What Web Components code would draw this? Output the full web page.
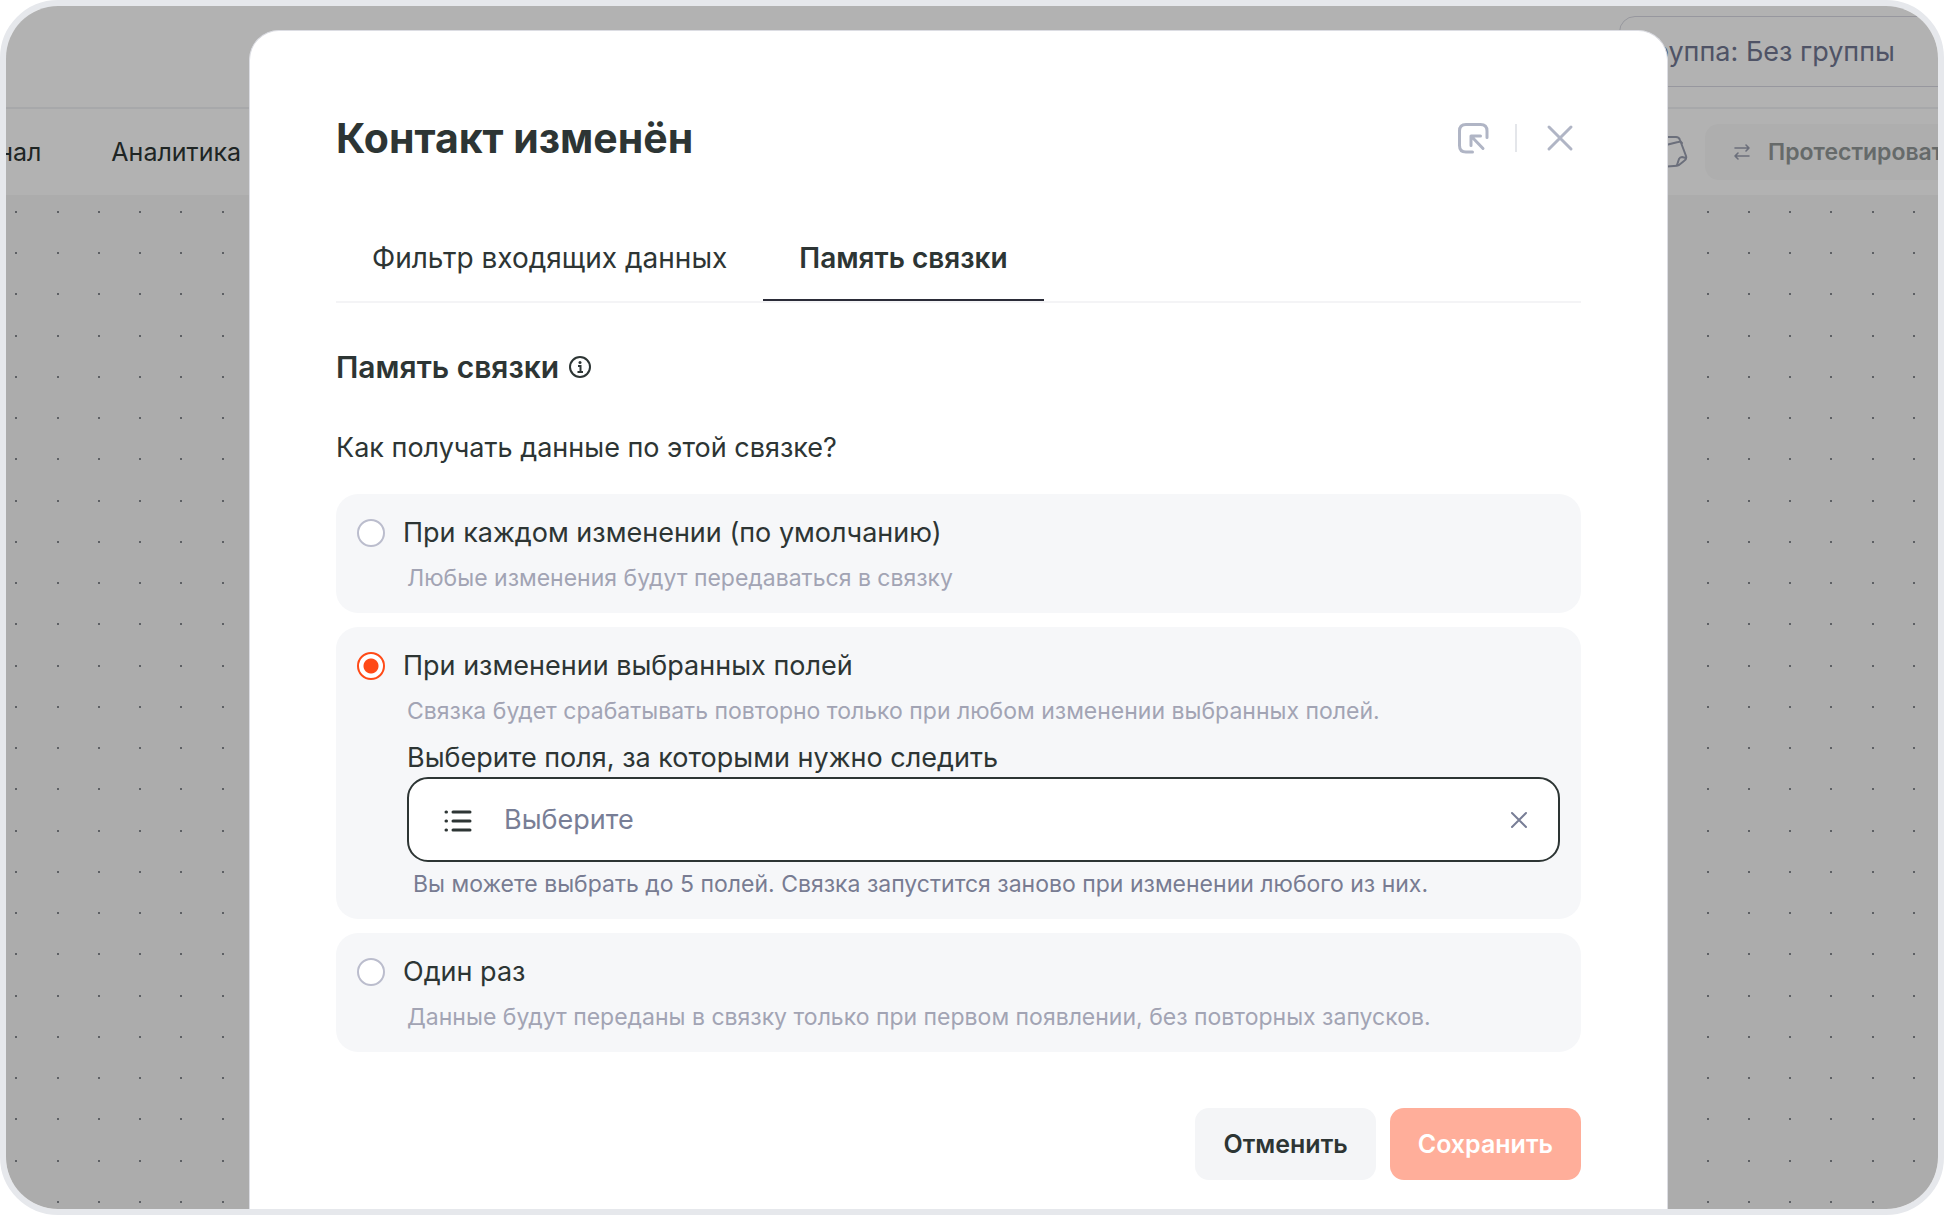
<!DOCTYPE html>
<html lang="ru">
<head>
<meta charset="utf-8">
<title>Контакт изменён</title>
<style>
  body {
    margin: 0;
    background: #fff;
    color: #2d3534;
    font-family: Inter, "Liberation Sans", sans-serif;
    font-size: 27px;
  }
</style>
</head>
<body>

<app-frame>
  <app-topbar slot="page"></app-topbar>
  <app-toolbar slot="page"></app-toolbar>
  <dot-canvas slot="page"></dot-canvas>

  <modal-window heading="Контакт изменён">
    <tab-list>
      <tab-item>Фильтр входящих данных</tab-item>
      <tab-item active>Память связки</tab-item>
    </tab-list>

    <memory-form>
      <option-card heading="При каждом изменении (по умолчанию)" text="Любые изменения будут передаваться в связку"></option-card>
      <option-card checked heading="При изменении выбранных полей" text="Связка будет срабатывать повторно только при любом изменении выбранных полей.">
        <field-picker label="Выберите поля, за которыми нужно следить" placeholder="Выберите">Вы можете выбрать до 5 полей. Связка запустится заново при изменении любого из них.</field-picker>
      </option-card>
      <option-card heading="Один раз" text="Данные будут переданы в связку только при первом появлении, без повторных запусков."></option-card>
    </memory-form>

    <action-button slot="footer">Отменить</action-button>
    <action-button slot="footer" primary>Сохранить</action-button>
  </modal-window>
</app-frame>

<script>
// base: every element only gives its template
class BaseElement extends HTMLElement {
  constructor() {
    super();
    this.attachShadow({ mode: "open" });
  }

  attr(name) {
    return this.getAttribute(name) || "";
  }

  connectedCallback() {
    const template = document.createElement("template");
    template.innerHTML = this.getTemplate();
    this.shadowRoot.replaceChildren(template.content.cloneNode(true));
  }
}

// rounded frame: page below, dimmed, and the modal on top
class AppFrame extends BaseElement {
  getTemplate() {
    return `
      <style>
        :host {
          display: block;
          box-sizing: border-box;
          height: 100vh;
          position: relative;
          overflow: hidden;
          border: 6px solid #e6e8ec;
          border-radius: 58px;
        }
        .page {
          display: flex;
          flex-direction: column;
          height: 100%;
        }
        .overlay {
          position: absolute;
          inset: 0;
          display: flex;
          box-sizing: border-box;
          padding: 24px 270px 0 243px;
          background: rgba(0, 0, 0, .3);
        }
      </style>
      <div class="page"><slot name="page"></slot></div>
      <div class="overlay"><slot></slot></div>
    `;
  }
}

class AppTopbar extends BaseElement {
  getTemplate() {
    return `
      <style>
        :host {
          display: flex;
          align-items: flex-start;
          justify-content: flex-end;
          height: 91px;
          padding-top: 10px;
          border-bottom: 2px solid #f0f1f4;
        }
        button {
          box-sizing: border-box;
          height: 71px;
          margin-right: -60px;
          padding: 0 102px 0 18px;
          border: 1px solid #d8d9e2;
          border-radius: 16px;
          background: #fff;
          color: #717892;
          font: inherit;
          line-height: 69px;
          white-space: nowrap;
        }
      </style>
      <button type="button">Группа: Без группы</button>
    `;
  }
}

class AppToolbar extends BaseElement {
  getTemplate() {
    return `
      <style>
        :host {
          display: flex;
          justify-content: space-between;
          height: 86px;
          font-size: 25px;
          background: #fff;
        }
        nav {
          display: flex;
          align-items: center;
          justify-content: flex-end;
          gap: 70px;
          width: 235px;
        }
        a {
          color: inherit;
          text-decoration: none;
        }
        .tools {
          display: flex;
          align-items: center;
          gap: 17px;
          width: 298px;
          overflow: hidden;
        }
        .tools svg { flex: none; }
        button {
          display: flex;
          align-items: center;
          flex: none;
          gap: 17px;
          height: 56px;
          padding: 0 28px;
          border: 0;
          border-radius: 14px;
          background: #fafafa;
          color: #929998;
          font: inherit;
          font-size: 23px;
          font-weight: 600;
        }
        button svg { color: #9a9fb0; }
      </style>
      <nav>
        <a href="#">Журнал</a>
        <a href="#">Аналитика</a>
      </nav>
      <div class="tools">
        <svg width="48" height="36" viewBox="0 0 48 36" fill="none" stroke="#9a9fb0" stroke-width="2" stroke-linecap="round" stroke-linejoin="round">
          <path d="M18 3h18q3 0 4 3l6 16q1 3-2 5l-5 4q-2 1-5 1L20 33"/>
          <path d="M18 13l20-5q3-1 4 1"/>
          <path d="M37 31l2-6q1-2 3-2l4 1"/>
        </svg>
        <button type="button">
          <svg width="18" height="18" viewBox="0 0 18 18" fill="none" stroke="currentColor" stroke-width="1.600" stroke-linecap="round" stroke-linejoin="round">
            <path d="M2 5h14M13 2l3 3-3 3M16 13H2M5 10l-3 3 3 3"/>
          </svg>
          Протестировать
        </button>
      </div>
    `;
  }
}

// grid of dots, one tile holds 4 x 4 of them
class DotCanvas extends BaseElement {
  getTemplate() {
    const columns = [10, 52, 93, 134];
    const rows = [10, 51, 92, 134];
    const dots = rows.map(y => columns.map(x =>
      `<rect x="${x - 1}" y="${y - 3}" width="2" height="2"/>`).join("")).join("");

    return `
      <style>
        :host {
          display: block;
          flex: 1;
          min-height: 0;
          background: #f6f6f6;
        }
        svg { display: block; }
      </style>
      <svg width="100%" height="100%" aria-hidden="true">
        <pattern id="dots" width="165" height="165" patternUnits="userSpaceOnUse" patternTransform="translate(0 9)">
          <g fill="#868a90">${dots}</g>
        </pattern>
        <rect width="100%" height="100%" fill="url(#dots)"/>
      </svg>
    `;
  }
}

class ModalWindow extends BaseElement {
  getTemplate() {
    return `
      <style>
        :host {
          display: block;
          flex: 1;
          box-sizing: border-box;
          padding: 81px 86px 0;
          border: 1px solid #dcdde3;
          border-bottom: 0;
          border-radius: 30px 30px 0 0;
          background: #fff;
        }
        header {
          display: flex;
          align-items: center;
          margin-bottom: 52px;
        }
        h1 {
          flex: 1;
          margin: 0;
          font-size: 41px;
          line-height: 52px;
          font-weight: 700;
        }
        header button {
          display: flex;
          padding: 0;
          border: 0;
          background: none;
          color: #b0b5c5;
        }
        .line {
          width: 2px;
          height: 28px;
          margin: 0 22px 0 26px;
          background: #e4e6ea;
        }
        footer {
          display: flex;
          justify-content: flex-end;
          gap: 14px;
          margin-top: 56px;
        }
      </style>
      <header>
        <h1>${this.attr("heading")}</h1>
        <button type="button" aria-label="Свернуть">
          <svg width="32" height="32" viewBox="0 0 32 32" fill="none" stroke="currentColor" stroke-width="3" stroke-linecap="round" stroke-linejoin="round">
            <path d="M15.500 30H9Q2.500 30 2.500 23.500V9Q2.500 2.500 9 2.500H23.500Q30 2.500 30 9V15.500"/>
            <path d="M14 23.500V14H23.500M14 14L26 26.500"/>
          </svg>
        </button>
        <span class="line"></span>
        <button type="button" aria-label="Закрыть">
          <svg width="42" height="32" viewBox="0 0 42 32" fill="none" stroke="currentColor" stroke-width="3" stroke-linecap="round">
            <path d="M10 5l22 22M32 5L10 27"/>
          </svg>
        </button>
      </header>
      <slot></slot>
      <footer><slot name="footer"></slot></footer>
    `;
  }
}

class TabList extends BaseElement {
  getTemplate() {
    return `
      <style>
        :host {
          display: flex;
          border-bottom: 2px solid #f4f4f6;
        }
      </style>
      <slot></slot>
    `;
  }

  connectedCallback() {
    this.setAttribute("role", "tablist");
    super.connectedCallback();
  }
}

class TabItem extends BaseElement {
  getTemplate() {
    const active = this.hasAttribute("active");

    return `
      <style>
        :host { display: block; }
        button {
          display: block;
          padding: 0 36px;
          border: 0;
          background: none;
          color: inherit;
          font: inherit;
          font-size: 28px;
          line-height: 85px;
        }
        button[aria-selected="true"] {
          font-weight: 600;
          box-shadow: inset 0 -2px #2b2c38;
        }
      </style>
      <button type="button" role="tab" aria-selected="${active}"><slot></slot></button>
    `;
  }
}

class MemoryForm extends BaseElement {
  getTemplate() {
    return `
      <style>
        :host { display: block; }
        h2 {
          display: flex;
          align-items: center;
          gap: 9px;
          margin: 44px 0 41px;
          font-size: 30px;
          line-height: 40px;
          font-weight: 600;
        }
        p {
          margin: 0 0 26px;
          line-height: 40px;
        }
        .options {
          display: flex;
          flex-direction: column;
          gap: 14px;
        }
      </style>
      <h2>
        Память связки
        <svg width="24" height="24" viewBox="0 0 24 24" fill="none" stroke="currentColor" stroke-width="2">
          <circle cx="12" cy="12" r="10"/>
          <path d="M10 11h2.500v6M9.500 17h5.500"/>
          <circle cx="12" cy="7.500" r="1.500" fill="currentColor" stroke="none"/>
        </svg>
      </h2>
      <p id="question">Как получать данные по этой связке?</p>
      <div class="options" role="radiogroup" aria-labelledby="question"><slot></slot></div>
    `;
  }
}

class OptionCard extends BaseElement {
  getTemplate() {
    return `
      <style>
        :host {
          display: block;
          padding: 16px 21px 13px;
          border-radius: 22px;
          background: #f6f7f9;
        }
        label {
          display: flex;
          align-items: center;
          gap: 18px;
          line-height: 46px;
        }
        input {
          appearance: none;
          flex: none;
          width: 28px;
          height: 28px;
          margin: 0;
          border: 2px solid #bbbdcd;
          border-radius: 50%;
          background: #fff;
        }
        input:checked {
          border-color: #ff4a17;
          background: radial-gradient(circle, #ff4a17 7px, #fff 8px);
        }
        .details { padding-left: 50px; }
        p {
          margin: 0;
          color: #a2a4b4;
          font-size: 23px;
          line-height: 44px;
        }
      </style>
      <label>
        <input type="radio" name="mode" aria-describedby="text" ${this.hasAttribute("checked") ? "checked" : ""}>
        ${this.attr("heading")}
      </label>
      <div class="details">
        <p id="text">${this.attr("text")}</p>
        <slot></slot>
      </div>
    `;
  }
}

class FieldPicker extends BaseElement {
  getTemplate() {
    return `
      <style>
        :host { display: block; }
        label {
          display: block;
          padding-top: 6px;
          line-height: 38px;
        }
        .field {
          display: flex;
          align-items: center;
          box-sizing: border-box;
          height: 85px;
          padding: 0 27px 0 33px;
          border: 2px solid #2d3534;
          border-radius: 21px;
          background: #fff;
        }
        input {
          flex: 1;
          min-width: 0;
          padding: 0;
          margin: 0 16px 0 30px;
          border: 0;
          outline: 0;
          background: none;
          color: inherit;
          font: inherit;
        }
        input::placeholder { color: #787e96; opacity: 1; }
        button {
          display: flex;
          padding: 0;
          border: 0;
          background: none;
          color: #787e96;
        }
        p {
          margin: 0;
          padding-left: 6px;
          color: #787c92;
          font-size: 23px;
          line-height: 44px;
        }
      </style>
      <label for="fields">${this.attr("label")}</label>
      <div class="field">
        <svg width="32" height="32" viewBox="0 0 32 32" fill="none" stroke="#2d3534" stroke-width="3" stroke-linecap="round">
          <path d="M11 8h17M11 17h17M11 26h17M4 8h.500M4 17h.500M4 26h.500"/>
        </svg>
        <input id="fields" type="text" placeholder="${this.attr("placeholder")}">
        <button type="button" aria-label="Очистить">
          <svg width="24" height="24" viewBox="0 0 24 24" fill="none" stroke="currentColor" stroke-width="2" stroke-linecap="round">
            <path d="M5 5l14 14M19 5L5 19"/>
          </svg>
        </button>
      </div>
      <p><slot></slot></p>
    `;
  }
}

class ActionButton extends BaseElement {
  getTemplate() {
    return `
      <style>
        :host { display: block; }
        button {
          padding: 0 28px;
          border: 0;
          border-radius: 14px;
          background: #f4f5f7;
          color: inherit;
          font: inherit;
          font-size: 25px;
          font-weight: 600;
          line-height: 72px;
        }
        :host([primary]) button {
          background: #ffae9a;
          color: #fff;
        }
      </style>
      <button type="button"><slot></slot></button>
    `;
  }
}

customElements.define("app-frame", AppFrame);
customElements.define("app-topbar", AppTopbar);
customElements.define("app-toolbar", AppToolbar);
customElements.define("dot-canvas", DotCanvas);
customElements.define("modal-window", ModalWindow);
customElements.define("tab-list", TabList);
customElements.define("tab-item", TabItem);
customElements.define("memory-form", MemoryForm);
customElements.define("option-card", OptionCard);
customElements.define("field-picker", FieldPicker);
customElements.define("action-button", ActionButton);
</script>
</body>
</html>
